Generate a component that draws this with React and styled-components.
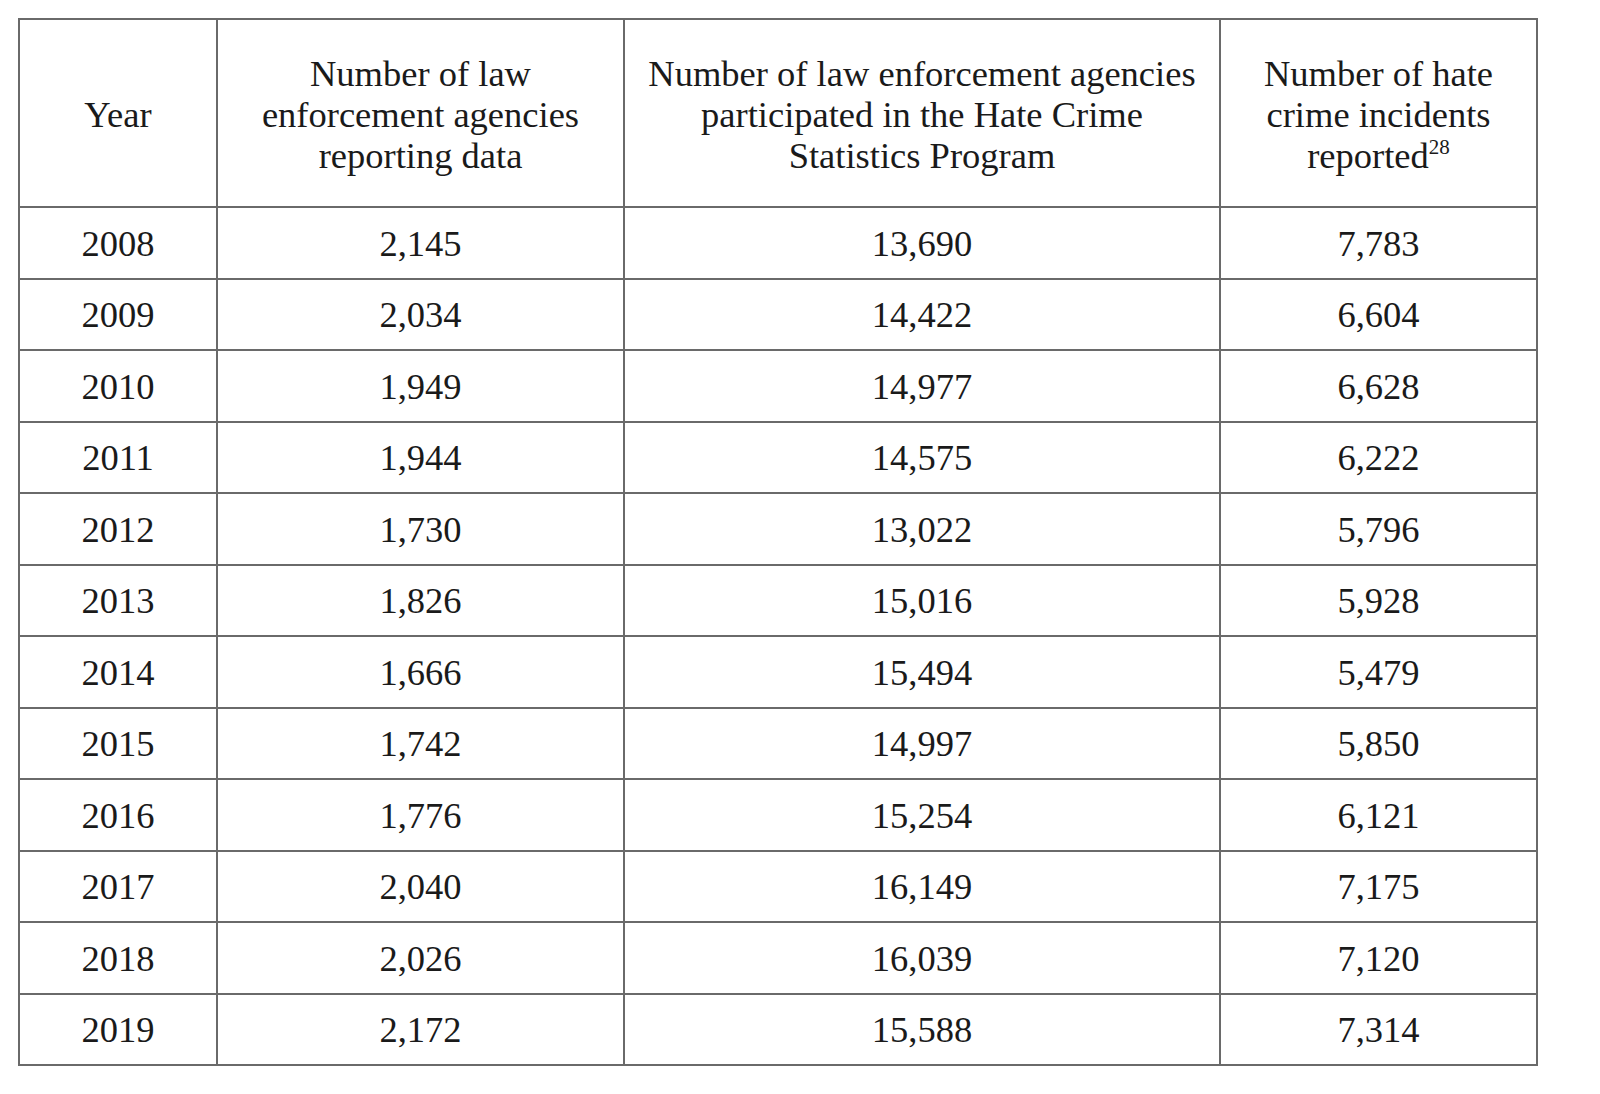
import React from "react";
import styled, { createGlobalStyle } from "styled-components";

const Global = createGlobalStyle`
  html, body { margin: 0; padding: 0; background: #ffffff; }
  body { font-family: "Liberation Serif", "Times New Roman", serif; color: #1a1a1a; }
`;

const Page = styled.div`
  padding: 18px 0 0 18px;
  width: 1600px;
  height: 1094px;
  box-sizing: border-box;
  background: #fff;
`;

const Table = styled.table`
  border-collapse: collapse;
  table-layout: fixed;
  width: 1518px;
  font-size: 36.5px;
  border: 2px solid #7a7a7a;
`;

const HeadCell = styled.th`
  font-weight: normal;
  border: 2px solid #6a6a6a;
  text-align: center;
  vertical-align: middle;
  height: 188px;
  padding: 3px 4px 0;
  line-height: 41px;
  box-sizing: border-box;
`;

const Cell = styled.td`
  border: 2px solid #6a6a6a;
  text-align: center;
  vertical-align: middle;
  height: 67.5px;
  padding: 2px 0 0;
  line-height: 40px;
  box-sizing: content-box;
`;

const Sup = styled.sup`
  font-size: 21px;
  line-height: 0;
  vertical-align: 14px;
`;

const rows = [
  ["2008", "2,145", "13,690", "7,783"],
  ["2009", "2,034", "14,422", "6,604"],
  ["2010", "1,949", "14,977", "6,628"],
  ["2011", "1,944", "14,575", "6,222"],
  ["2012", "1,730", "13,022", "5,796"],
  ["2013", "1,826", "15,016", "5,928"],
  ["2014", "1,666", "15,494", "5,479"],
  ["2015", "1,742", "14,997", "5,850"],
  ["2016", "1,776", "15,254", "6,121"],
  ["2017", "2,040", "16,149", "7,175"],
  ["2018", "2,026", "16,039", "7,120"],
  ["2019", "2,172", "15,588", "7,314"],
];

export default function App() {
  return (
    <Page>
      <Global />
      <Table>
        <colgroup>
          <col style={{ width: 198 }} />
          <col style={{ width: 407 }} />
          <col style={{ width: 596 }} />
          <col style={{ width: 317 }} />
        </colgroup>
        <thead>
          <tr>
            <HeadCell>Year</HeadCell>
            <HeadCell>
              Number of law
              <br />
              enforcement agencies
              <br />
              reporting data
            </HeadCell>
            <HeadCell>
              Number of law enforcement agencies
              <br />
              participated in the Hate Crime
              <br />
              Statistics Program
            </HeadCell>
            <HeadCell>
              Number of hate
              <br />
              crime incidents
              <br />
              reported<Sup>28</Sup>
            </HeadCell>
          </tr>
        </thead>
        <tbody>
          {rows.map((r) => (
            <tr key={r[0]}>
              {r.map((v, i) => (
                <Cell key={i}>{v}</Cell>
              ))}
            </tr>
          ))}
        </tbody>
      </Table>
    </Page>
  );
}
